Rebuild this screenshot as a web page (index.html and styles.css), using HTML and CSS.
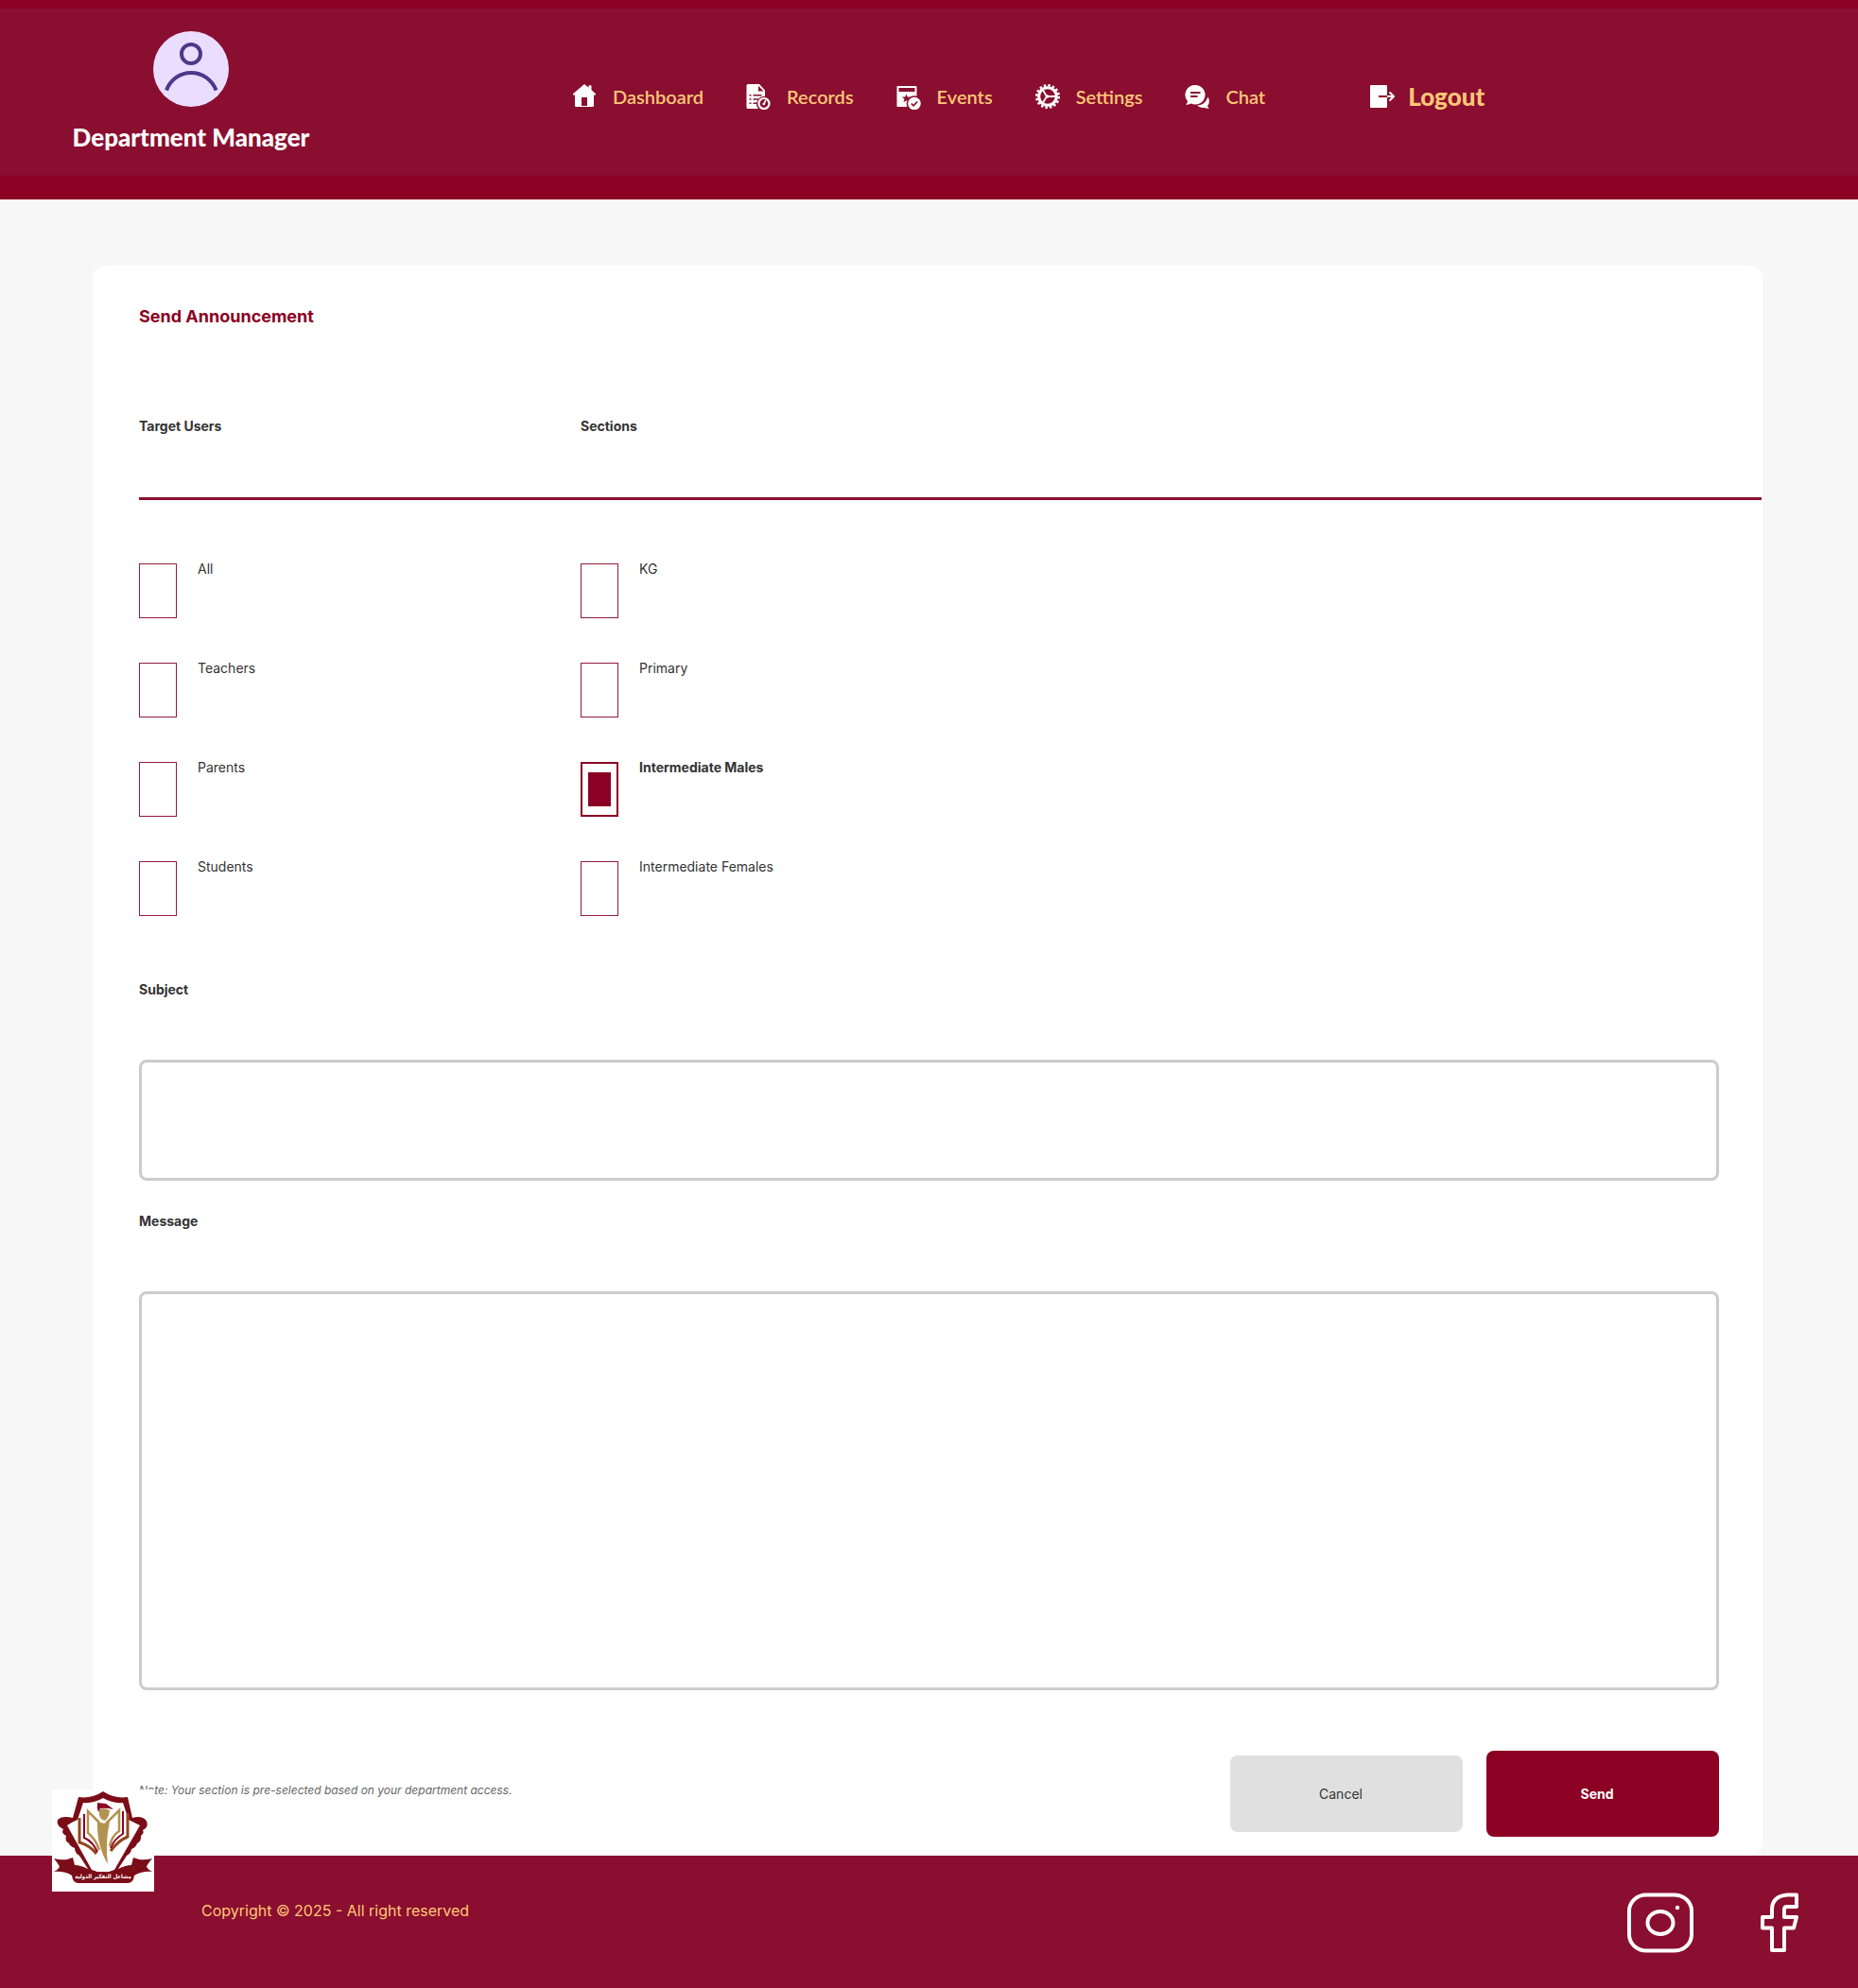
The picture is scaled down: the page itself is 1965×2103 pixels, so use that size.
FILE: index.html
```html
<!DOCTYPE html>
<html lang="en">
<head>
<meta charset="utf-8">
<title>Send Announcement</title>
<link rel="stylesheet" href="styles.css">
</head>
<body>
<header class="topbar">
  <div class="profile">
    <svg class="avatar" viewBox="0 0 80 80" aria-hidden="true">
      <circle cx="40" cy="40" r="40" fill="#eaddff"/>
      <g fill="none" stroke="#4f378b" stroke-width="4">
        <circle cx="40" cy="24" r="10"/>
        <path d="M14 62.500C18 51.500 28 44 40 44s22.500 7.500 26.500 18.500"/>
      </g>
    </svg>
    <span class="role">Department Manager</span>
  </div>
  <nav class="nav" aria-label="Main">
    <a class="nav-link" href="#dashboard">
      <svg class="icon" viewBox="0 0 26 28" aria-hidden="true"><path fill="#fff" fill-rule="evenodd" d="M13 1l4.500 3.800V3q0-.8.8-.8h1.400q.8 0 .8.800v4.300L25 11.300v1.200h-2V24q0 1-1 1H4q-1 0-1-1V12.500H1v-1.200zM10 15v9h6v-9z"/></svg>
      Dashboard
    </a>
    <a class="nav-link" href="#records">
      <svg class="icon" viewBox="0 0 26 28" aria-hidden="true">
        <path fill="#fff" fill-rule="evenodd" d="M2 1h12l6 6.500V14a8 8 0 0 0-7 13H2q-1.500 0-1.500-1.500v-23Q.5 1 2 1zM13 2.800V8.500h5.500z"/>
        <path stroke="#8a0e2f" stroke-width="1.500" d="M3.500 12.700h2M7.500 12.700h9M3.500 17h2M7.500 17h6M3.500 21.200h2M7.500 21.200h4"/>
        <circle cx="19" cy="21.500" r="5.500" fill="#8a0e2f" stroke="#fff" stroke-width="2.200"/>
        <path stroke="#fff" stroke-width="1.800" d="M19 22l1.800-4"/>
        <circle cx="18.700" cy="22" r="1.300" fill="#fff"/>
      </svg>
      Records
    </a>
    <a class="nav-link" href="#events">
      <svg class="icon" viewBox="0 0 26 28" aria-hidden="true">
        <path fill="#fff" fill-rule="evenodd" d="M1.500 3h19q1 0 1 1v21h-20q-1 0-1-1V4q0-1 1-1zM2.500 5v4h17V5z"/>
        <path fill="#8a0e2f" d="M10.500 11.500l1.200 3h3.300l-2.500 2.200 1 3.600-3-2-3 2 1-3.600L6 14.500h3.300z"/>
        <circle cx="19" cy="21.500" r="8.300" fill="#8a0e2f"/>
        <circle cx="19" cy="21.500" r="6.800" fill="#fff"/>
        <path fill="none" stroke="#8a0e2f" stroke-width="1.700" d="M15.800 21.500l2.300 2.300 4.200-4.300"/>
      </svg>
      Events
    </a>
    <a class="nav-link" href="#settings">
      <svg class="icon" viewBox="0 0 26 28" aria-hidden="true">
        <g fill="none" stroke="#fff">
          <circle cx="13" cy="14" r="11.700" stroke-width="2.600" stroke-dasharray="2.450 2.144"/>
          <circle cx="13" cy="14" r="9.300" stroke-width="3"/>
          <path stroke-width="1.800" d="M12 14h10M12 14L7.500 6.500M12 14l-4.500 7.500"/>
        </g>
        <circle cx="12.500" cy="14" r="1.800" fill="#fff"/>
      </svg>
      Settings
    </a>
    <a class="nav-link" href="#chat">
      <svg class="icon" viewBox="0 0 26 28" aria-hidden="true">
        <path fill="#fff" d="M11 2a10.500 10.300 0 1 1-4.500 19.600Q4.500 23 1 22.500q2-1.500 2-3.500A10.500 10.300 0 0 1 11 2z"/>
        <path stroke="#8a0e2f" stroke-width="2" d="M6 10h10.500M6 14h7.500"/>
        <path fill="#fff" d="M24.500 14.500q3 5.500-.5 9.500 0 1.500 2 2.700-3.500.3-5.500-1-4 1-7.500-2.200 8 .3 11.500-9z"/>
      </svg>
      Chat
    </a>
    <a class="nav-link logout" href="#logout">
      <svg class="icon" viewBox="0 0 26 28" aria-hidden="true">
        <path fill="#fff" d="M1 2h16q1 0 1 1v22q0 1-1 1H1q-1 0-1-1V3q0-1 1-1z"/>
        <path stroke="#8a0e2f" stroke-width="2" d="M9 14h9"/>
        <path fill="none" stroke="#fff" stroke-width="2" d="M18 14h7.500M20.500 9.500L25 14l-4.500 4.500"/>
      </svg>
      Logout
    </a>
  </nav>
</header>

<main class="main">
  <form class="card">
    <h1 class="title">Send Announcement</h1>
    <div class="groups">
      <div class="group" role="group" aria-labelledby="users-heading">
        <div class="group-head"><h2 class="label" id="users-heading">Target Users</h2></div>
        <div class="options">
          <label class="option"><input class="check" type="checkbox" name="users"> All</label>
          <label class="option"><input class="check" type="checkbox" name="users"> Teachers</label>
          <label class="option"><input class="check" type="checkbox" name="users"> Parents</label>
          <label class="option"><input class="check" type="checkbox" name="users"> Students</label>
        </div>
      </div>
      <div class="group" role="group" aria-labelledby="sections-heading">
        <div class="group-head"><h2 class="label" id="sections-heading">Sections</h2></div>
        <div class="options">
          <label class="option"><input class="check" type="checkbox" name="sections"> KG</label>
          <label class="option"><input class="check" type="checkbox" name="sections"> Primary</label>
          <label class="option"><input class="check" type="checkbox" name="sections" checked> Intermediate Males</label>
          <label class="option"><input class="check" type="checkbox" name="sections"> Intermediate Females</label>
        </div>
      </div>
    </div>
    <div class="field">
      <label class="label" for="subject">Subject</label>
      <input class="control subject" id="subject" type="text">
    </div>
    <div class="field">
      <label class="label" for="message">Message</label>
      <textarea class="control message" id="message"></textarea>
    </div>
    <div class="actions">
      <p class="note">Note: Your section is pre-selected based on your department access.</p>
      <button class="button cancel" type="button">Cancel</button>
      <button class="button send" type="submit">Send</button>
    </div>
  </form>
</main>

<footer class="footer">
  <svg class="crest" viewBox="0 0 108 108" role="img" aria-label="School crest">
    <rect width="108" height="108" fill="#fff"/>
    <path fill="#7b0d18" fill-rule="evenodd" d="M54 2Q66 10 80 8L85 30Q94 27 99 32Q104 39 96 43Q98 46 94 49Q95 54 90 57Q89 61 84 63Q84 67 79 70L68 87H40L29 70Q24 67 24 62Q19 60 18 57Q13 54 15 49Q9 46 12 42Q4 38 6 32Q11 27 22 30L28 8Q42 10 54 2zM54 9Q44 15 33 14L27 32Q20 35 16 38L42 85Q54 91 66 85L93 38Q87 35 81 32L75 14Q64 15 54 9z"/>
    <path fill="none" stroke="#96461c" stroke-width="3" d="M29 30V56Q40 59 47 68M80 25V50Q70 54 62 65"/>
    <path fill="none" stroke="#8b0023" stroke-width="2" d="M34 26V51Q43 55 48 66M75 23V47Q66 52 62 62"/>
    <path fill="none" stroke="#b3934f" stroke-width="2.500" d="M50 35L38 23V46Q46 52 50 64M57 36L71 22V44Q63 49 61 60"/>
    <path fill="#b3934f" d="M50 21q6-2 11 1 0 5-3 9l-2 2q-5-1-6-6zM48 33q6 5 13 1-5 22-2 45-12-20-11-46z"/>
    <path fill="#8b0023" d="M48 14l9 1 8 6q-8-2-14-1l-2 4q-2-5-1-10z"/>
    <path fill="#7b0d18" d="M2 73q8 2 14 1l6-2 2 8q6 0 14 4 16 7 32 0 8-4 14-4l2-8 6 2q6 1 14-1-6 7-6 9 2 3 6 5-10-1-19 4-1 8-7 8H28q-6 0-7-8-8-5-19-4 4-2 6-5-1-3-6-9z"/>
    <text class="crest-text" x="54" y="94" text-anchor="middle" lang="ar">مشاعل التفكير الدولية</text>
  </svg>
  <p class="copyright">Copyright © 2025 - All right reserved</p>
  <div class="social">
    <a href="#instagram" aria-label="Instagram">
      <svg class="insta" viewBox="0 0 70 64" aria-hidden="true"><g fill="none" stroke="#fff" stroke-width="4"><rect x="2" y="2.500" width="66" height="59" rx="18" ry="17"/><ellipse cx="35" cy="32" rx="13.500" ry="12"/></g><circle cx="53" cy="16" r="2.200" fill="#fff"/></svg>
    </a>
    <a href="#facebook" aria-label="Facebook">
      <svg class="fb" viewBox="0 0 40 64" aria-hidden="true"><path fill="none" stroke="#fff" stroke-width="4" stroke-linejoin="round" d="M38 2.500H28Q12 4 12 18v8H2v11.500h10V61h13V37.500h10L38 26H25v-8q0-3 3-3h10z"/></svg>
    </a>
  </div>
</footer>
</body>
</html>
```
FILE: styles.css
```css
* {
  box-sizing: border-box;
}

body {
  margin: 0;
  min-height: 100vh;
  display: flex;
  flex-direction: column;
  background: #f7f7f7;
  color: #333;
  font-family: Inter, "Liberation Sans", sans-serif;
  font-size: 14px;
}

h1,
h2,
p {
  margin: 0;
}

/* Header */
.topbar {
  display: flex;
  align-items: flex-start;
  height: 211px;
  padding: 24px 78px 0;
  background: #8a0e2f;
  border-top: 9px solid #8b0023;
  border-bottom: 25px solid #8b0023;
  font-family: Lato, sans-serif;
}

.profile {
  display: flex;
  flex-direction: column;
  align-items: center;
  gap: 16px;
  width: 248px;
}

.avatar {
  width: 80px;
  height: 80px;
}

.role {
  color: #fff;
  font-size: 26px;
  font-weight: 900;
  line-height: 32px;
  white-space: nowrap;
}

.nav {
  display: flex;
  align-items: center;
  gap: 45px;
  margin: 53px 0 0 279px;
}

.nav-link {
  display: flex;
  align-items: center;
  gap: 17px;
  color: #ffc777;
  font-size: 20px;
  font-weight: 600;
  line-height: 32px;
  text-decoration: none;
}

.icon {
  width: 26px;
  height: 28px;
}

.logout {
  gap: 14px;
  margin-left: 66px;
  font-size: 26px;
  font-weight: 900;
}

/* Announcement form */
.main {
  flex: 1;
  padding: 70px 101px 0 98px;
}

.card {
  padding: 43px 46px 20px 49px;
  background: #fff;
  border-radius: 14px;
}

.title {
  color: #8b0023;
  font-size: 18px;
  font-weight: 700;
  line-height: 22px;
}

.groups {
  display: grid;
  grid-template-columns: 467px 1fr;
  margin: 95px -45px 68px 0;
}

.group-head {
  padding-bottom: 65px;
  border-bottom: 3px solid #8a0e2f;
}

.label {
  display: block;
  font-size: 14px;
  font-weight: 700;
  line-height: 20px;
}

.options {
  display: grid;
  gap: 47px;
  margin-top: 67px;
}

.option {
  display: flex;
  gap: 22px;
  font-size: 14px;
  line-height: 12px;
}

.option:has(:checked) {
  font-weight: 700;
}

.check {
  appearance: none;
  width: 40px;
  height: 58px;
  margin: 0;
  border: 1px solid #931b3f;
  background: #fff;
}

.check:checked {
  border: 2px solid #8b0023;
  padding: 9px 6px;
  background: #8b0023 content-box;
}

.field {
  margin-bottom: 33px;
}

.control {
  display: block;
  width: 100%;
  margin-top: 64px;
  padding: 16px;
  border: 3px solid #ccc;
  border-radius: 8px;
  background: #fff;
  font: inherit;
  resize: none;
}

.subject {
  height: 128px;
}

.message {
  height: 422px;
}

.actions {
  display: flex;
  align-items: center;
  gap: 25px;
  margin-top: 64px;
}

.note {
  flex: 1;
  padding-bottom: 8px;
  color: #666;
  font-size: 12px;
  font-style: italic;
}

.button {
  width: 246px;
  padding: 0 12px 0 0;
  border: 0;
  border-radius: 8px;
  font: inherit;
}

.cancel {
  height: 81px;
  background: #e0e0e0;
  color: #333;
}

.send {
  height: 91px;
  background: #8b0023;
  color: #fff;
  font-weight: 700;
}

/* Footer */
.footer {
  position: relative;
  display: flex;
  justify-content: space-between;
  height: 140px;
  padding: 39px 63px 0 213px;
  background: #8a0e2f;
}

.crest {
  position: absolute;
  top: -70px;
  left: 55px;
  width: 108px;
  height: 108px;
}

.crest-text {
  fill: #fff;
  font-family: "DejaVu Sans Condensed", "DejaVu Sans", sans-serif;
  font-size: 6px;
  font-weight: 700;
}

.copyright {
  color: #ffc777;
  font-size: 16px;
  line-height: 38px;
}

.social {
  display: flex;
  gap: 71px;
}

.insta {
  display: block;
  width: 70px;
  height: 64px;
}

.fb {
  display: block;
  width: 40px;
  height: 64px;
}
```
